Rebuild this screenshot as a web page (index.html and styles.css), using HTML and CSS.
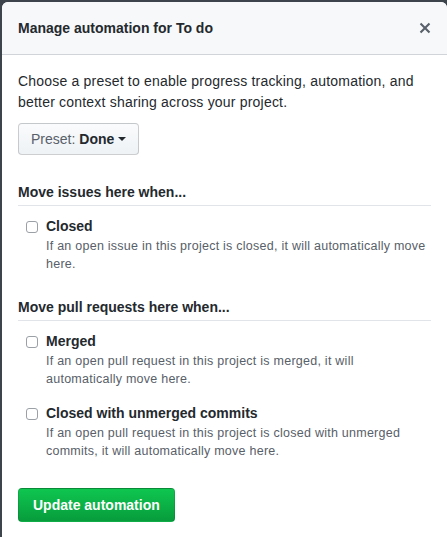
FILE: index.html
```html
<!DOCTYPE html>
<html lang="en">
<head>
<meta charset="utf-8">
<title>Manage automation for To do</title>
<link rel="stylesheet" href="styles.css">
</head>
<body>
<div class="dialog">
  <div class="dialog-header">
    <h1 class="dialog-title">Manage automation for To do</h1>
    <button class="close-btn" aria-label="Close">
      <svg width="12" height="16" viewBox="0 0 12 16" aria-hidden="true"><path fill-rule="evenodd" d="M7.48 8l3.75 3.75-1.48 1.48L6 9.48l-3.75 3.75-1.48-1.48L4.52 8 .77 4.25l1.48-1.48L6 6.52l3.75-3.75 1.48 1.48L7.48 8z"/></svg>
    </button>
  </div>
  <div class="dialog-body">
    <p class="intro">Choose a preset to enable progress tracking, automation, and better context sharing across your project.</p>
    <button class="btn btn-preset"><span class="muted">Preset:</span> <strong>Done</strong><span class="caret"></span></button>

    <h2 class="section-title">Move issues here when...</h2>
    <div class="options">
      <label class="option">
        <input type="checkbox" class="check">
        <span class="option-text">
          <span class="option-label">Closed</span>
          <span class="option-note">If an open issue in this project is closed, it will automatically move here.</span>
        </span>
      </label>
    </div>

    <h2 class="section-title">Move pull requests here when...</h2>
    <div class="options">
      <label class="option">
        <input type="checkbox" class="check">
        <span class="option-text">
          <span class="option-label">Merged</span>
          <span class="option-note">If an open pull request in this project is merged, it will automatically move here.</span>
        </span>
      </label>
      <label class="option">
        <input type="checkbox" class="check">
        <span class="option-text">
          <span class="option-label">Closed with unmerged commits</span>
          <span class="option-note">If an open pull request in this project is closed with unmerged commits, it will automatically move here.</span>
        </span>
      </label>
    </div>

    <button class="btn btn-primary">Update automation</button>
  </div>
</div>
</body>
</html>
```

FILE: styles.css
```css
html, body {
  margin: 0;
  height: 100%;
}
body {
  background: #3d444c;
  padding: 2px 0 0 2px;
  box-sizing: border-box;
  overflow: hidden;
  font-family: "Liberation Sans", Arial, sans-serif;
  font-size: 14px;
  color: #24292e;
}
.dialog {
  width: 445px;
  min-height: 100%;
  background: #fff;
  border-radius: 6px 6px 0 0;
  overflow: hidden;
}
.dialog-header {
  display: flex;
  align-items: center;
  justify-content: space-between;
  padding: 16px;
  background: #f6f8fa;
  border-bottom: 1px solid #d1d5da;
}
.dialog-title {
  margin: 0;
  font-size: 14px;
  line-height: 20px;
  font-weight: 700;
  color: #24292e;
}
.close-btn {
  display: flex;
  padding: 0;
  border: 0;
  background: none;
  color: #586069;
  fill: #586069;
  cursor: pointer;
}
.dialog-body {
  padding: 16px;
}
.intro {
  margin: 0 0 10px;
  line-height: 21px;
  letter-spacing: 0.2px;
}
.btn {
  display: inline-flex;
  align-items: center;
  font-family: inherit;
  font-size: 14px;
  line-height: 20px;
  font-weight: 700;
  border-radius: 4px;
  cursor: pointer;
}
.btn-preset {
  margin-bottom: 3px;
  padding: 5px 12px;
  color: #24292e;
  background: linear-gradient(180deg, #fafbfc 0%, #eff3f6 90%);
  border: 1px solid rgba(27, 31, 35, 0.2);
}
.btn-preset .muted {
  font-weight: 400;
  color: #586069;
  margin-right: 4px;
}
.caret {
  display: inline-block;
  width: 0;
  height: 0;
  margin-left: 4px;
  border-top: 4px solid #24292e;
  border-left: 4px solid transparent;
  border-right: 4px solid transparent;
}
.section-title {
  margin: 24px 0 0;
  padding-bottom: 2px;
  font-size: 14px;
  line-height: 21px;
  font-weight: 700;
  border-bottom: 1px solid #e1e4e8;
}
.options {
  display: flex;
  flex-direction: column;
  gap: 15px;
  padding: 10px 0 0 8px;
}
.option {
  display: flex;
  align-items: flex-start;
  gap: 8px;
}
.check {
  appearance: none;
  -webkit-appearance: none;
  flex: none;
  width: 12px;
  height: 12px;
  margin: 5px 0 0;
  border: 1px solid #9aa0a6;
  border-radius: 3px;
  background: #fff;
}
.option-text {
  display: flex;
  flex-direction: column;
}
.option-label {
  font-weight: 700;
  line-height: 21px;
}
.option-note {
  font-size: 12.5px;
  letter-spacing: 0.25px;
  line-height: 18px;
  color: #586069;
}
.btn-primary {
  margin-top: 28px;
  padding: 6px 14px;
  color: #fff;
  background: linear-gradient(180deg, #0fc650 0%, #079c3c 100%);
  border: 1px solid rgba(27, 31, 35, 0.15);
}
```
